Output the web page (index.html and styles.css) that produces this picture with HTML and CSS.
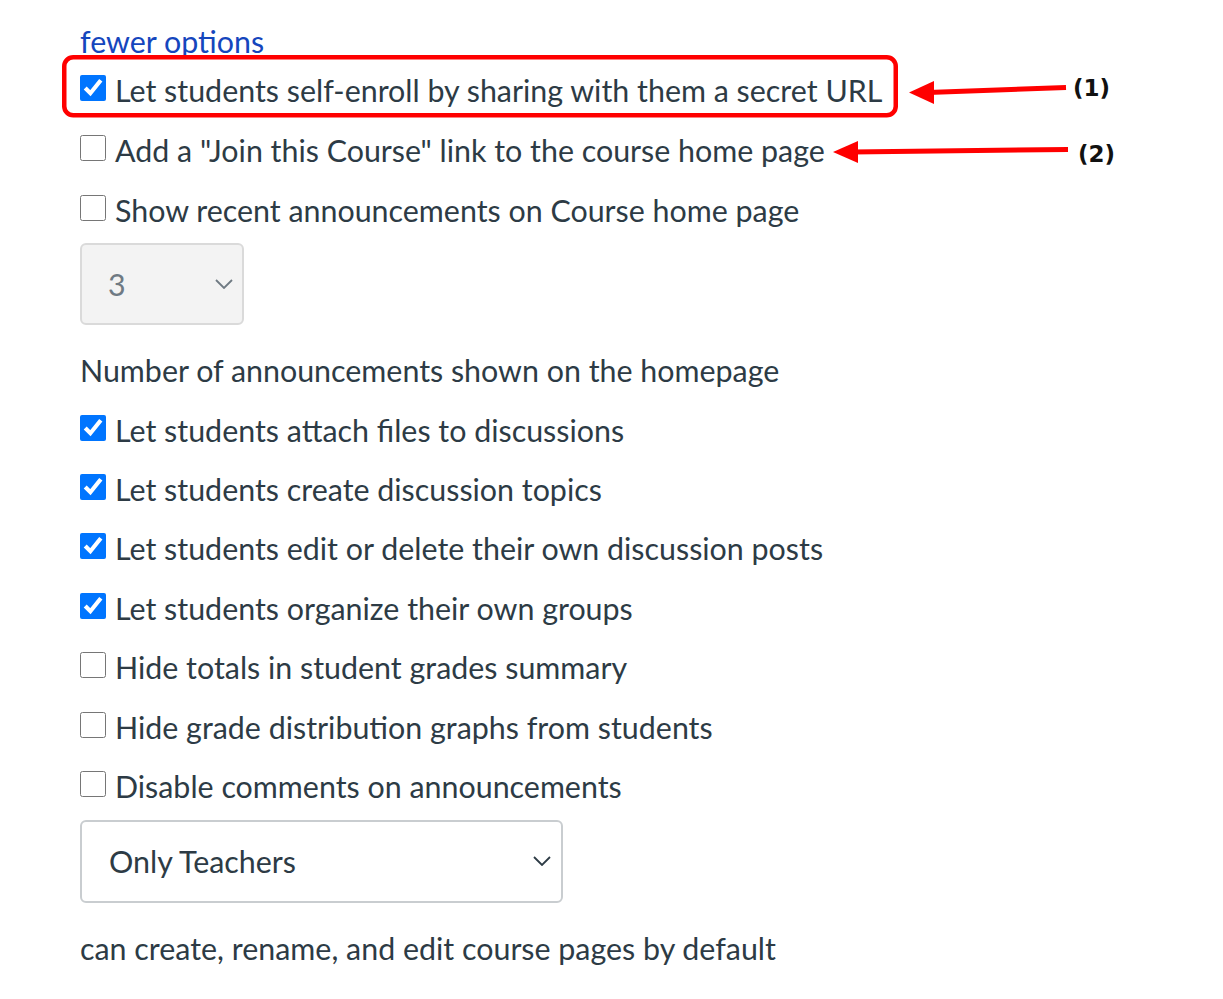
FILE: index.html
```html
<!DOCTYPE html>
<html>
<head>
<meta charset="utf-8">
<link rel="stylesheet" href="styles.css">
</head>
<body>
<div class="page">
  <a class="link" href="#">fewer options</a>
  <label class="row"><input type="checkbox" checked><span>Let students self-enroll by sharing with them a secret URL</span></label>
  <label class="row"><input type="checkbox"><span>Add a "Join this Course" link to the course home page</span></label>
  <label class="row"><input type="checkbox"><span>Show recent announcements on Course home page</span></label>
  <div class="select small disabled">
    <span class="val">3</span>
    <svg class="chev" width="18" height="10" viewBox="0 0 18 10"><path d="M1 1 L9 9 L17 1" fill="none" stroke="currentColor" stroke-width="1.8"/></svg>
  </div>
  <div class="text">Number of announcements shown on the homepage</div>
  <div class="list">
    <label class="row r2"><input type="checkbox" checked><span>Let students attach files to discussions</span></label>
    <label class="row r2"><input type="checkbox" checked><span>Let students create discussion topics</span></label>
    <label class="row r2"><input type="checkbox" checked><span>Let students edit or delete their own discussion posts</span></label>
    <label class="row r2"><input type="checkbox" checked><span>Let students organize their own groups</span></label>
    <label class="row r2"><input type="checkbox"><span>Hide totals in student grades summary</span></label>
    <label class="row r2"><input type="checkbox"><span>Hide grade distribution graphs from students</span></label>
    <label class="row r2"><input type="checkbox"><span>Disable comments on announcements</span></label>
  </div>
  <div class="select wide">
    <span class="val">Only Teachers</span>
    <svg class="chev" width="18" height="10" viewBox="0 0 18 10"><path d="M1 1 L9 9 L17 1" fill="none" stroke="currentColor" stroke-width="1.8"/></svg>
  </div>
  <div class="text last">can create, rename, and edit course pages by default</div>
</div>
<svg class="annot" width="1223" height="999" viewBox="0 0 1223 999">
  <rect x="64.25" y="57.25" width="831.5" height="58" rx="9" ry="9" fill="none" stroke="#ff0000" stroke-width="4.5"/>
  <line x1="928" y1="92.5" x2="1066" y2="87.5" stroke="#ff0000" stroke-width="5"/>
  <polygon points="909,92.5 934,81 934,104" fill="#ff0000"/>
  <line x1="852" y1="152" x2="1068" y2="149.5" stroke="#ff0000" stroke-width="5"/>
  <polygon points="833,152 858,141 858,163" fill="#ff0000"/>
</svg>
<div class="label l1">(1)</div>
<div class="label l2">(2)</div>
</body>
</html>
```

FILE: styles.css
```css
html, body {
  margin: 0;
  padding: 0;
  background: #ffffff;
}
body {
  font-family: Lato, "Noto Sans", sans-serif;
  font-size: 30.4px;
  color: #2d3b45;
  position: relative;
  width: 1223px;
  height: 999px;
  overflow: hidden;
}
.page {
  padding: 24px 0 0 80px;
  display: flex;
  flex-direction: column;
  align-items: flex-start;
}
.link {
  display: block;
  color: #1546bd;
  text-decoration: none;
  line-height: 34px;
  height: 36px;
}
.row {
  display: flex;
  align-items: center;
  height: 60px;
  gap: 9px;
  white-space: nowrap;
}
.row input {
  width: 26px;
  height: 26px;
  margin: -4px 0 0 0;
  flex: none;
}
.list {
  display: flex;
  flex-direction: column;
}
.row.r2 {
  height: 59.4px;
}
.select {
  box-sizing: border-box;
  display: flex;
  align-items: center;
  justify-content: space-between;
  border: 2px solid #c9cdd0;
  border-radius: 6px;
  background: #ffffff;
  padding: 0 10px 0 27px;
}
.select .val {
  line-height: 1;
}
.select .chev {
  display: block;
  color: #2d3b45;
}
.select.small {
  width: 164px;
  height: 82px;
  margin-top: 3px;
  padding-right: 9px;
  padding-left: 26px;
}
.select.disabled {
  background: #f3f3f3;
  border-color: #dadada;
  color: #6f7a83;
}
.select.disabled .chev {
  color: #6f7a83;
}
.select.wide {
  width: 483px;
  height: 83px;
  margin-top: 4px;
}
.text {
  height: 60px;
  line-height: 60px;
  margin-top: 15px;
  white-space: nowrap;
}
.text.last {
  margin-top: 15px;
}
.annot {
  position: absolute;
  left: 0;
  top: 0;
  pointer-events: none;
}
.label {
  position: absolute;
  font-family: "DejaVu Sans", sans-serif;
  font-weight: bold;
  font-size: 23px;
  line-height: 1;
  color: #111111;
}
.l1 {
  left: 1073px;
  top: 77px;
}
.l2 {
  left: 1078px;
  top: 143px;
}
```
